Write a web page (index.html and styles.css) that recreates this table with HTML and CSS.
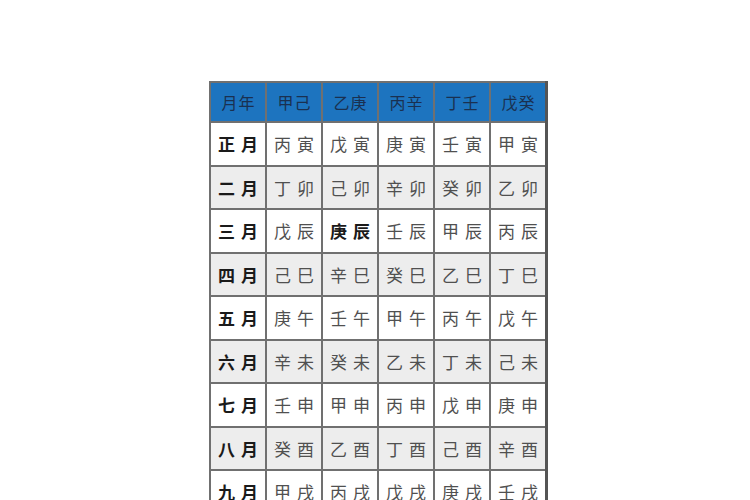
FILE: index.html
```html
<!DOCTYPE html>
<html lang="zh">
<head>
<meta charset="utf-8">
<link rel="stylesheet" href="styles.css">
</head>
<body>
<div class="page">
  <table class="ganzhi">
    <thead>
      <tr><th>月年</th><th>甲己</th><th>乙庚</th><th>丙辛</th><th>丁壬</th><th>戊癸</th></tr>
    </thead>
    <tbody>
      <tr><td class="m">正月</td><td>丙寅</td><td>戊寅</td><td>庚寅</td><td>壬寅</td><td>甲寅</td></tr>
      <tr class="alt"><td class="m">二月</td><td>丁卯</td><td>己卯</td><td>辛卯</td><td>癸卯</td><td>乙卯</td></tr>
      <tr><td class="m">三月</td><td>戊辰</td><td class="b">庚辰</td><td>壬辰</td><td>甲辰</td><td>丙辰</td></tr>
      <tr class="alt"><td class="m">四月</td><td>己巳</td><td>辛巳</td><td>癸巳</td><td>乙巳</td><td>丁巳</td></tr>
      <tr><td class="m">五月</td><td>庚午</td><td>壬午</td><td>甲午</td><td>丙午</td><td>戊午</td></tr>
      <tr class="alt"><td class="m">六月</td><td>辛未</td><td>癸未</td><td>乙未</td><td>丁未</td><td>己未</td></tr>
      <tr><td class="m">七月</td><td>壬申</td><td>甲申</td><td>丙申</td><td>戊申</td><td>庚申</td></tr>
      <tr class="alt"><td class="m">八月</td><td>癸酉</td><td>乙酉</td><td>丁酉</td><td>己酉</td><td>辛酉</td></tr>
      <tr><td class="m">九月</td><td>甲戌</td><td>丙戌</td><td>戊戌</td><td>庚戌</td><td>壬戌</td></tr>
    </tbody>
  </table>
</div>
</body>
</html>
```
FILE: styles.css
```css
html, body {
  margin: 0;
  padding: 0;
  background: #ffffff;
}
.page {
  padding: 81px 0 0 209px;
  font-family: "Noto Sans CJK SC", "Noto Sans", sans-serif;
}
.ganzhi {
  border-collapse: collapse;
  table-layout: fixed;
  border-right: 3px solid #555;
}
.ganzhi th,
.ganzhi td {
  width: 54px;
  border: 2px solid #707070;
  text-align: center;
  padding: 0;
  letter-spacing: 6px;
  text-indent: 6px;
  white-space: nowrap;
}
.ganzhi th {
  height: 38px;
  background: #1d74bf;
  color: #1a3050;
  font-weight: normal;
  font-size: 16px;
  letter-spacing: 1px;
  text-indent: 1px;
}
.ganzhi td {
  height: 41.5px;
  font-size: 17px;
  color: #505050;
  background: #ffffff;
}
.ganzhi tr.alt td {
  background: #ededed;
}
.ganzhi td.m,
.ganzhi td.b {
  color: #1a1a1a;
  font-weight: bold;
}
```
